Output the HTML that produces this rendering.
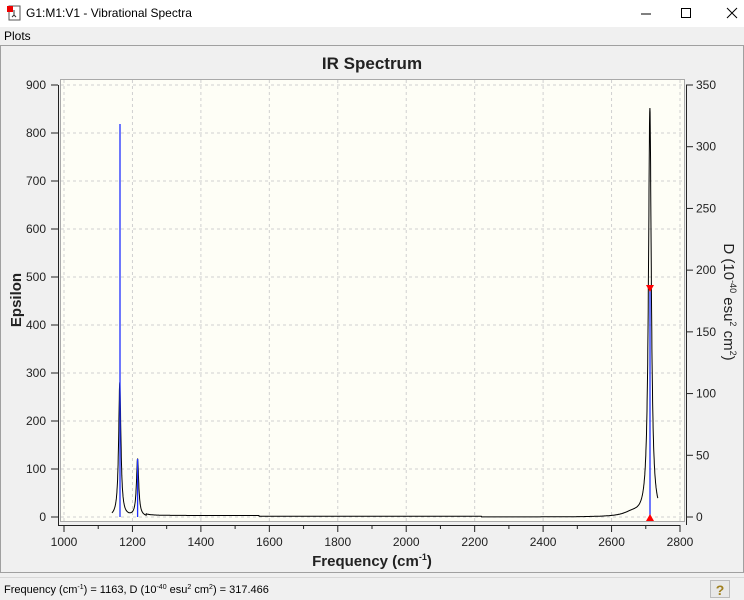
<!DOCTYPE html>
<html><head><meta charset="utf-8"><style>
body{margin:0;width:744px;height:600px;background:#f0f0f0;font-family:"Liberation Sans",sans-serif;overflow:hidden;position:relative}
.tb{position:absolute;left:0;top:0;width:744px;height:27px;background:#fff;font-size:12px}
.menu{position:absolute;top:27px;left:0;width:744px;height:18px;font-size:12px}
</style></head><body>
<div class="tb">
<svg style="position:absolute;left:6px;top:5px" width="16" height="16"><rect x="3" y="1" width="11" height="14" fill="#fff" stroke="#555"/><rect x="1" y="1" width="6" height="6" fill="#e00"/><path d="M8 5v5M6 12l2-2 2 2" stroke="#333" fill="none"/></svg>
<span style="position:absolute;left:26px;top:6px">G1:M1:V1 - Vibrational Spectra</span>
<svg style="position:absolute;left:640px;top:6px" width="104" height="16"><path d="M1 8h10" stroke="#000"/><rect x="41.5" y="2.5" width="9" height="9" fill="none" stroke="#000"/><path d="M87 2l10 10M97 2l-10 10" stroke="#000"/></svg>
</div>
<div class="menu"><span style="position:absolute;left:4px;top:2px">Plots</span></div>
<svg style="position:absolute;left:0;top:0" width="744" height="600" font-family="Liberation Sans, sans-serif">
<rect x="0.5" y="45.5" width="743" height="527" fill="#f0f0f0" stroke="#a0a0a0"/>
<text x="372" y="69" font-size="17" font-weight="bold" text-anchor="middle" fill="#222">IR Spectrum</text>
<rect x="60.5" y="79.5" width="624" height="442" fill="#fefef6" stroke="#a9a9a9"/>
<g id="grid" stroke="#d0d0d0" stroke-dasharray="3,3"></g>
<polyline id="spec" fill="none" stroke="#000" stroke-width="1"/>
<g stroke="#2030ff" stroke-width="1.3">
<line x1="120" y1="517" x2="120" y2="124"/><line x1="137.6" y1="517" x2="137.6" y2="459"/><line x1="650" y1="517" x2="650" y2="287"/></g>
<path d="M646 285l4 7 4-7z" fill="#f00"/><path d="M646 521l4-7 4 7z" fill="#f00"/>
<g stroke="#222" fill="none"><path d="M58.5 85v440M686.5 85v440M58 525.5H680"/></g>
<g id="ax" font-size="12" fill="#222"></g>
<text transform="translate(21,300) rotate(-90)" font-size="15" font-weight="bold" text-anchor="middle" fill="#222">Epsilon</text>
<text x="372" y="566" font-size="15" font-weight="bold" text-anchor="middle" fill="#222">Frequency (cm<tspan dy="-6" font-size="9">-1</tspan><tspan dy="6">)</tspan></text>
<text transform="translate(724,302) rotate(90)" font-size="15" text-anchor="middle" fill="#222">D (10<tspan dy="-6" font-size="9">-40</tspan><tspan dy="6"> esu</tspan><tspan dy="-6" font-size="9">2</tspan><tspan dy="6"> cm</tspan><tspan dy="-6" font-size="9">2</tspan><tspan dy="6">)</tspan></text>
<line x1="0" y1="577.5" x2="744" y2="577.5" stroke="#d8d8d8"/>
<text x="4" y="593" font-size="11" fill="#000">Frequency (cm<tspan dy="-4" font-size="7">-1</tspan><tspan dy="4">) = 1163, D (10</tspan><tspan dy="-4" font-size="7">-40</tspan><tspan dy="4"> esu</tspan><tspan dy="-4" font-size="7">2</tspan><tspan dy="4"> cm</tspan><tspan dy="-4" font-size="7">2</tspan><tspan dy="4">) = 317.466</tspan></text>
<rect x="710.5" y="580.5" width="19" height="17" fill="#e8e8e8" stroke="#bbb"/>
<text x="720" y="595" font-size="14" font-weight="bold" text-anchor="middle" fill="#a08020">?</text>
</svg>
<script>
var X=function(f){return 64+(f-1000)*616/1800},Y=function(e){return 517-e*0.48};
var g=document.getElementById('grid'),ax=document.getElementById('ax'),s='',a='';
for(var f=1000;f<=2800;f+=200){var x=X(f);s+='<line x1="'+x+'" y1="80" x2="'+x+'" y2="521"/>';a+='<text x="'+x+'" y="546" text-anchor="middle">'+f+'</text>';}
for(var f=1000;f<=2800;f+=100){var x=X(f);a+='<line x1="'+x+'" y1="525" x2="'+x+'" y2="'+(f%200?529:532)+'" stroke="#222"/>';}
for(var e=0;e<=900;e+=100){var y=Y(e);s+='<line x1="61" y1="'+y+'" x2="684" y2="'+y+'"/>';a+='<text x="46" y="'+(y+4)+'" text-anchor="end">'+e+'</text><line x1="51" y1="'+y+'" x2="58" y2="'+y+'" stroke="#222"/>';}
for(var d=0;d<=350;d+=50){var y=517-d*432/350;a+='<text x="696" y="'+(y+4)+'">'+d+'</text><line x1="686" y1="'+y+'" x2="693" y2="'+y+'" stroke="#222"/>';}
g.innerHTML=s;ax.innerHTML=a;
var pk=[[1163,280,4],[1215,120,4],[2712,850,5],[2660,8,30]],p=[];
for(var f=1140;f<=2735;f+=0.5){var e=0;pk.forEach(function(k){e+=k[1]*k[2]*k[2]/((f-k[0])*(f-k[0])+k[2]*k[2])});if(f>1240&&f<1570)e+=3;else if(f>=1570&&f<2220)e+=1.5;p.push(X(f).toFixed(1)+','+Y(e).toFixed(1));}
document.getElementById('spec').setAttribute('points',p.join(' '));
</script>
</body></html>
